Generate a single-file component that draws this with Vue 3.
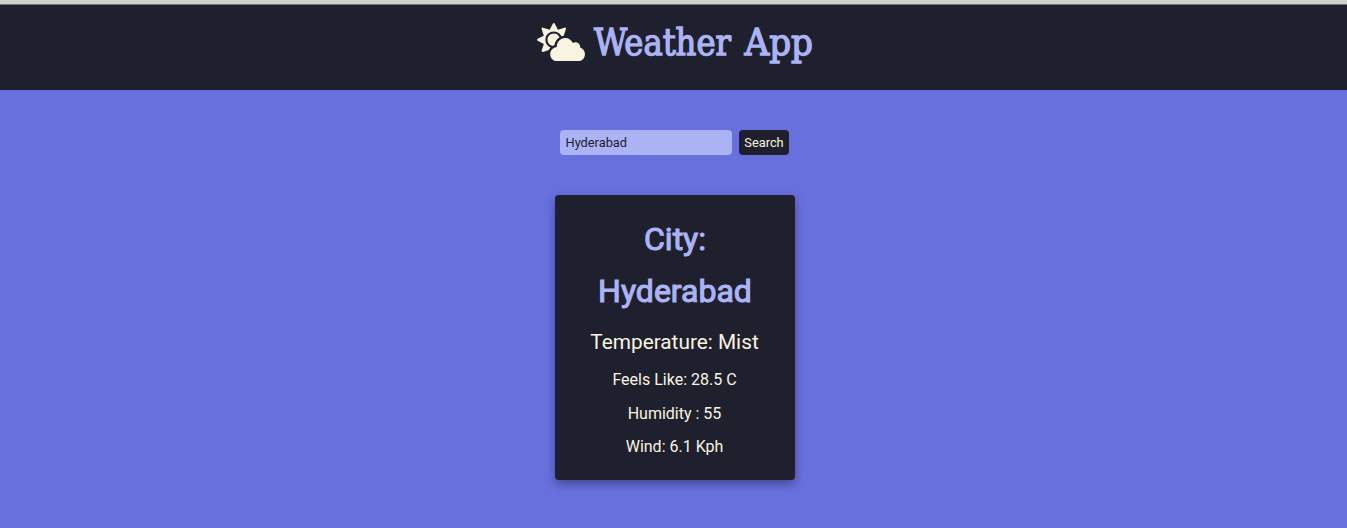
<script setup>
const details = ['Feels Like: 28.5 C', 'Humidity : 55', 'Wind: 6.1 Kph']
</script>

<template>
  <div class="page">
    <header class="header">
      <svg class="icon" viewBox="0 0 640 512" aria-hidden="true">
        <path fill="currentColor" d="M575.2 325.7c.2-1.9.8-3.7.8-5.6 0-35.3-28.7-64-64-64-12.6 0-24.2 3.8-34.1 10-17.6-38.8-56.5-66-101.9-66-61.8 0-112 50.1-112 112 0 3 .7 5.8.9 8.7-49.6 3.7-88.9 44.7-88.9 95.3 0 53 43 96 96 96h272c53 0 96-43 96-96 0-42.1-27.2-77.4-64.8-90.4zm-430.4-22.6c-43.7-43.7-43.7-114.7 0-158.3 43.7-43.7 114.7-43.7 158.4 0 9.7 9.7 16.9 20.9 22.3 32.7 9.8-3.7 20.1-6 30.7-7.5L386 81.1c4-11.9-7.3-23.1-19.2-19.2L279 91.2 237.5 8.4C232-2.8 216-2.8 210.4 8.4L169 91.2 81.1 61.9C69.3 58 58 69.3 61.9 81.1l29.3 87.8-82.8 41.5c-11.2 5.6-11.2 21.5 0 27.1l82.8 41.4-29.3 87.8c-4 11.9 7.3 23.1 19.2 19.2l76.1-25.3c6.1-12.4 14-23.7 23.6-33.5-13.1-5.4-25.4-13.4-36-24zm-4.8-79.2c0 40.8 29.3 74.8 67.9 82.3 8-4.7 16.3-8.8 25.2-11.7 5.4-44.3 31-82.5 67.4-105C287.3 160.4 258 140 224 140c-46.3 0-84 37.6-84 83.9z" />
      </svg>
      <svg class="title" viewBox="0 0 222 56" role="heading" aria-level="1">
        <text x="1" y="40" textLength="137" lengthAdjust="spacingAndGlyphs">Weather</text>
        <text x="151.5" y="40" textLength="68.5" lengthAdjust="spacingAndGlyphs">App</text>
      </svg>
    </header>
    <main class="main">
      <form class="search" @submit.prevent>
        <input class="field" type="text" value="Hyderabad" />
        <button class="button" type="submit">Search</button>
      </form>
      <section class="card">
        <h1 class="city">City:<br />Hyderabad</h1>
        <p class="temp">Temperature: Mist</p>
        <p v-for="d in details" :key="d" class="detail">{{ d }}</p>
      </section>
    </main>
  </div>
</template>

<style>
body {
  margin: 0;
  background: #6870de;
}
</style>

<style scoped>
.page {
  height: 528px;
  box-sizing: border-box;
  overflow: hidden;
  border-top: 4px solid #cfcfcf;
  background: #6870de;
  font-family: Roboto, "Liberation Sans", sans-serif;
}
.header {
  height: 86px;
  box-sizing: border-box;
  border-top: 1px solid #74757a;
  background: #1f202d;
  display: flex;
  justify-content: center;
  align-items: flex-start;
  padding-top: 10px;
  padding-left: 5px;
}
.icon {
  width: 48px;
  height: 38.4px;
  margin-top: 7.5px;
  margin-right: 8px;
  color: #faf3e0;
}
.title {
  width: 222px;
  height: 56px;
  fill: #acb3f5;
  stroke: #acb3f5;
  stroke-width: 1.3px;
  font-family: "DejaVu Serif Condensed", "DejaVu Serif", serif;
  font-size: 37px;
}
.main {
  display: flex;
  flex-direction: column;
  align-items: center;
  padding: 40px 0 0 3px;
}
.search {
  display: flex;
  gap: 7px;
  height: 25px;
  margin-right: 1px;
}
.field,
.button {
  box-sizing: border-box;
  height: 25px;
  border: 0;
  border-radius: 4px;
  padding: 0 5px;
  font: 12.8px Roboto, "Liberation Sans", sans-serif;
}
.field {
  width: 172px;
  padding-left: 5.5px;
  background: #acb3f5;
  color: #1f202d;
}
.button {
  width: 50px;
  background: #1f202d;
  color: #faf3e0;
}
.card {
  width: 240px;
  height: 285px;
  box-sizing: border-box;
  margin-top: 40px;
  padding: 18px 1px 0 0;
  border-radius: 4px;
  background: #1f202d;
  box-shadow: 0 4px 10px rgba(0, 0, 0, 0.35);
  color: #faf3e0;
  text-align: center;
}
.city {
  margin: 0 -1px 0 0;
  font-size: 32px;
  line-height: 52px;
  font-weight: 400;
  -webkit-text-stroke: 1.1px #acb3f5;
  color: #acb3f5;
}
.temp {
  margin: 8px 0 4px;
  font-size: 20.8px;
  line-height: 34px;
}
.detail {
  margin: 0;
  font-size: 16px;
  line-height: 33.5px;
}
</style>
